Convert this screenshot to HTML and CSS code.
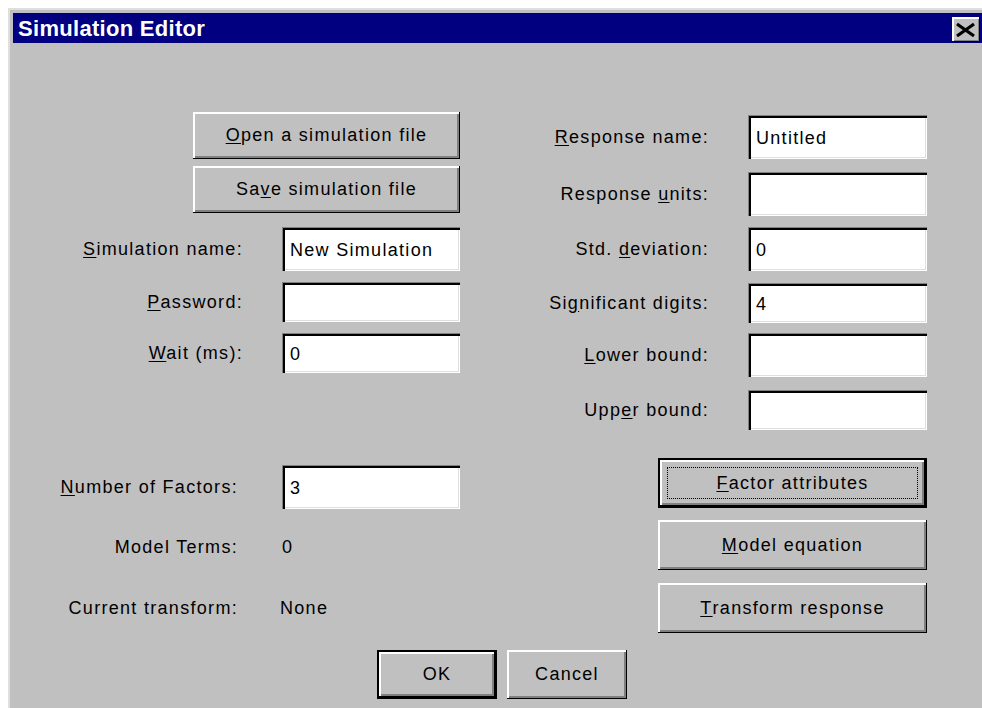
FILE: index.html
```html
<!DOCTYPE html>
<html lang="en">
<head>
<meta charset="utf-8">
<title>Simulation Editor</title>
<link rel="stylesheet" href="styles.css">
</head>
<body>
<div class="window">
  <div class="titlebar">
    <span class="title">Simulation Editor</span>
    <button class="close" type="button" aria-label="Close">
      <svg viewBox="0 0 28 25" width="28" height="25" aria-hidden="true">
        <path d="M5 7 L22 19 M22 7 L5 19" stroke="#000" stroke-width="3.2" fill="none"/>
      </svg>
    </button>
  </div>

  <div class="client">
    <div class="columns">
      <!-- simulation settings -->
      <div class="col col-left">
        <div class="row"><button class="btn btn-file" type="button"><u>O</u>pen a simulation file</button></div>
        <div class="row"><button class="btn btn-file" type="button">Sa<u>v</u>e simulation file</button></div>
        <div class="row"><label class="lbl lbl-left"><u>S</u>imulation name:</label><div class="field field-left">New Simulation</div></div>
        <div class="row"><label class="lbl lbl-left"><u>P</u>assword:</label><div class="field field-left slim"></div></div>
        <div class="row"><label class="lbl lbl-left"><u>W</u>ait (ms):</label><div class="field field-left slim">0</div></div>
        <div class="row"><label class="lbl lbl-left lbl-low"><u>N</u>umber of Factors:</label><div class="field field-left">3</div></div>
        <div class="row row-text"><span class="lbl lbl-left lbl-low">Model Terms:</span><span class="value">0</span></div>
        <div class="row row-text"><span class="lbl lbl-left lbl-low">Current transform:</span><span class="value value-none">None</span></div>
      </div>

      <!-- response settings -->
      <div class="col col-right">
        <div class="row"><label class="lbl lbl-right"><u>R</u>esponse name:</label><div class="field field-right">Untitled</div></div>
        <div class="row"><label class="lbl lbl-right">Response <u>u</u>nits:</label><div class="field field-right"></div></div>
        <div class="row"><label class="lbl lbl-right">Std. <u>d</u>eviation:</label><div class="field field-right">0</div></div>
        <div class="row"><label class="lbl lbl-right">Si<u>g</u>nificant digits:</label><div class="field field-right slim">4</div></div>
        <div class="row"><label class="lbl lbl-right"><u>L</u>ower bound:</label><div class="field field-right"></div></div>
        <div class="row"><label class="lbl lbl-right">Upp<u>e</u>r bound:</label><div class="field field-right slim"></div></div>
        <div class="row"><button class="btn btn-side btn-default" type="button"><span class="focus"><u>F</u>actor attributes</span></button></div>
        <div class="row"><button class="btn btn-side" type="button"><u>M</u>odel equation</button></div>
        <div class="row"><button class="btn btn-side" type="button"><u>T</u>ransform response</button></div>
      </div>
    </div>

    <div class="footer">
      <button class="btn btn-small btn-default" type="button">OK</button>
      <button class="btn btn-small" type="button">Cancel</button>
    </div>
  </div>
</div>
</body>
</html>
```

FILE: styles.css
```css
* {
  box-sizing: border-box;
}

html, body {
  margin: 0;
  padding: 0;
  background: #ffffff;
}

body {
  font-family: "Liberation Sans", Arial, sans-serif;
  font-size: 18px;
  letter-spacing: 1.3px;
  color: #000;
  overflow: hidden;
}

u {
  text-decoration: underline;
  text-underline-offset: 2px;
}

/* window frame (runs past the right edge of the view) */
.window {
  margin: 8px 0 0 8px;
  width: 974px;
  height: 700px;
  background: #c0c0c0;
  border-top: 2px solid #dfdfdf;
  border-left: 2px solid #dfdfdf;
  padding: 3px 0 0 3px;
  overflow: hidden;
}

.titlebar {
  height: 30px;
  background: #000080;
  display: flex;
  align-items: flex-start;
  justify-content: space-between;
  padding-left: 5px;
  padding-right: 2px;
}

.title {
  color: #fff;
  font-weight: bold;
  font-size: 22px;
  letter-spacing: 0.3px;
  line-height: 30px;
  padding-top: 1px;
}

.close {
  width: 28px;
  height: 25px;
  margin-top: 4px;
  padding: 0;
  border: none;
  background: #c0c0c0;
  box-shadow: inset -1px -1px #000, inset 2px 2px #fff, inset -2px -2px #808080;
  display: flex;
  align-items: center;
  justify-content: center;
}

.close svg {
  display: block;
}

/* dialog body */
.client {
  padding-top: 69px;
}

.columns {
  display: flex;
  align-items: flex-start;
}

.col {
  display: grid;
}

.col-left {
  width: 447px;
  grid-template-rows: 54px 61px 55px 51px 132px 62px 61px 40px;
}

.col-right {
  width: 467px;
  margin-top: 3px;
  grid-template-rows: 57px 55px 56px 50px 57px 68px 62px 63px 50px;
}

.row {
  display: flex;
  align-items: center;
  align-self: start;
}

.row-text {
  height: 40px;
}

.lbl {
  text-align: right;
  white-space: nowrap;
  margin-right: 39px;
}

.lbl-left {
  width: 230px;
}

.lbl-low {
  width: 225px;
  margin-right: 44px;
}

.lbl-right {
  width: 249px;
}

.value-none {
  margin-left: -2px;
}

/* sunken edit boxes */
.field {
  height: 44px;
  background: #fff;
  padding: 3px 6px 0 8px;
  display: flex;
  align-items: center;
  box-shadow: inset 1px 1px #808080, inset 3px 3px #000, inset -1px -1px #fff, inset -2px -2px #dfdfdf;
  white-space: nowrap;
  overflow: hidden;
}

.field.slim {
  height: 40px;
}

.field-left {
  width: 178px;
}

.field-right {
  width: 179px;
}

/* raised push buttons */
.btn {
  font: inherit;
  letter-spacing: inherit;
  color: #000;
  background: #c0c0c0;
  border: none;
  padding: 0;
  display: flex;
  align-items: center;
  justify-content: center;
  box-shadow: inset -1px -1px #000, inset 2px 2px #fff, inset -3px -3px #808080;
}

.btn-file {
  width: 267px;
  height: 47px;
  margin-left: auto;
}

.btn-side {
  width: 269px;
  height: 50px;
  margin-left: auto;
}

.btn-default {
  border: 2px solid #000;
}

.btn-default.btn-side {
  padding: 7px;
}

.focus {
  flex: 1;
  align-self: stretch;
  display: flex;
  align-items: center;
  justify-content: center;
  border: 1px dotted #000;
}

.footer {
  display: flex;
  gap: 10px;
  padding-left: 364px;
  margin-top: 17px;
}

.btn-small {
  width: 120px;
  height: 49px;
}
```
